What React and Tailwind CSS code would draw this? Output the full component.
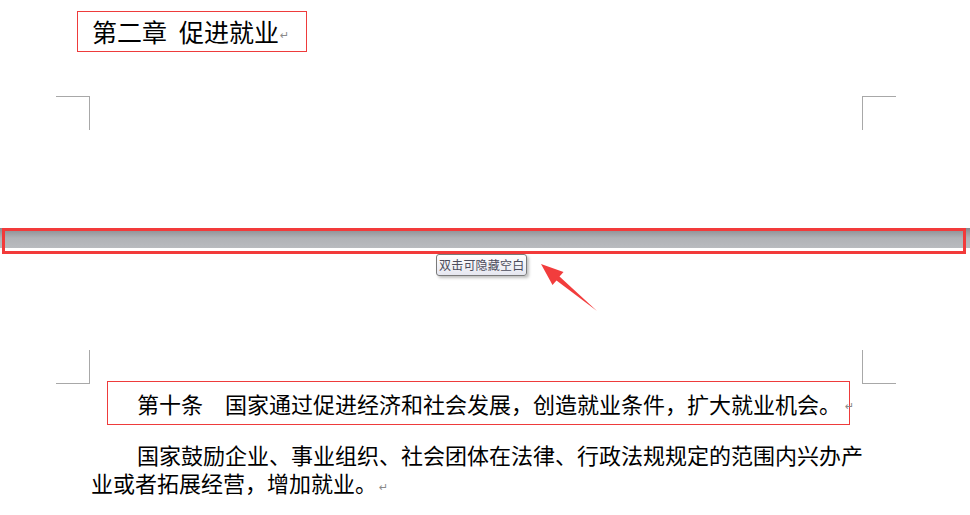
const CJK = { fontFamily: '"Noto Sans CJK SC", "Noto Sans", sans-serif' }

function ReturnMark({ className = '' }) {
  return (
    <span
      className={`text-[11px] leading-none text-[#8a8a8a] ${className}`}
      style={{ fontFamily: '"DejaVu Sans", sans-serif' }}
    >
      ↵
    </span>
  )
}

function Corner({ className }) {
  return <div className={`w-[34px] h-[34px] border-[#a8a8a8] ${className}`} />
}

export default function App() {
  return (
    <div className="relative w-[970px] h-[515px] bg-white overflow-hidden text-black" style={CJK}>
      {/* Chapter heading */}
      <div className="pt-[11px] pl-[77px]">
        <div className="w-[230px] h-[41px] border border-[#ee3b3b] flex items-center pl-[14px]">
          <span className="text-[25px] leading-none">第二章</span>
          <span className="w-[12px]" />
          <span className="text-[25px] leading-none">促进就业</span>
          <ReturnMark className="mt-[8px] ml-[1px]" />
        </div>
      </div>

      {/* Top page corners */}
      <div className="mt-[44px] ml-[56px] mr-[74px] flex justify-between">
        <Corner className="border-t border-r" />
        <Corner className="border-t border-l" />
      </div>

      {/* Page gap bar */}
      <div className="mt-[101px] h-[20px] bg-linear-to-b from-[#888a8f] via-[#b0b2b6] to-[#b9bbbf]">
        <div className="-mt-[3px] ml-[2px] mr-[4px] h-[26px] border-[3px] border-[#f23a3a]" />
      </div>

      {/* Tooltip */}
      <div className="mt-[3px] ml-[436px]">
        <div className="inline-flex items-center h-[22px] px-[2px] rounded-[3px] border border-[#7a7a7a] bg-linear-to-b from-white to-[#e6e7f0] shadow-[2px_2px_3px_rgba(0,0,0,0.25)]">
          <span className="text-[12px] leading-none text-[#4c4c5c] tracking-[0.2px]">双击可隐藏空白</span>
        </div>
      </div>

      {/* Bottom page corners */}
      <div className="mt-[74px] ml-[56px] mr-[74px] flex justify-between">
        <Corner className="border-b border-r" />
        <Corner className="border-b border-l" />
      </div>

      {/* Article 10 */}
      <div className="-mt-[3px] ml-[107px]">
        <div className="w-[743px] h-[44px] border border-[#ee3b3b] flex items-center pl-[29px] whitespace-nowrap">
          <span className="text-[22px] leading-none">第十条　国家通过促进经济和社会发展，创造就业条件，扩大就业机会。</span>
          <ReturnMark className="mt-[6px] ml-[4px]" />
        </div>
      </div>

      <div className="mt-[15px] ml-[91px] text-[22px] leading-[28px] whitespace-nowrap">
        <div className="pl-[46px]">国家鼓励企业、事业组织、社会团体在法律、行政法规规定的范围内兴办产</div>
        <div className="flex items-center">
          <span>业或者拓展经营，增加就业。</span>
          <ReturnMark className="mt-[10px] ml-[2px]" />
        </div>
      </div>

      {/* Annotation arrow */}
      <svg className="absolute left-0 top-0 pointer-events-none" width="970" height="515" viewBox="0 0 970 515">
        <polygon
          points="541,264 563.5,272 559.5,276.5 597,311 556.5,280.5 552.5,285"
          fill="#f23d3d"
        />
      </svg>
    </div>
  )
}
